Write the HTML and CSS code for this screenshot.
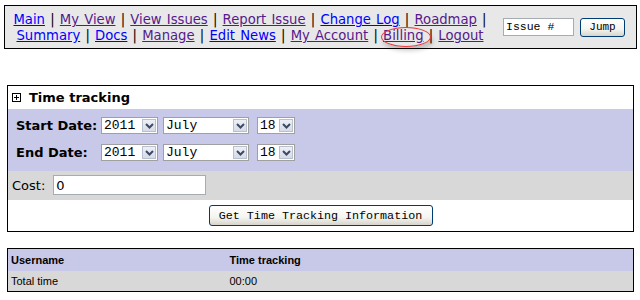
FILE: index.html
```html
<!DOCTYPE html>
<html lang="en">
<head>
  <meta charset="UTF-8" />
  <title>Time tracking</title>
  <link rel="stylesheet" href="styles.css">
</head>
<body>
  <div class="nav">
    <div class="nav-links">
      <a href="#" class="new">Main</a> |
      <a href="#">My View</a> |
      <a href="#">View Issues</a> |
      <a href="#">Report Issue</a> |
      <a href="#" class="new">Change Log</a> |
      <a href="#">Roadmap</a> |
      <a href="#" class="new">Summary</a> |
      <a href="#" class="new">Docs</a> |
      <a href="#">Manage</a> |
      <a href="#" class="new">Edit News</a> |
      <a href="#">My Account</a> |
      <a href="#">Billing</a> |
      <a href="#">Logout</a>
    </div>
    <form class="jump">
      <input type="text" class="jump-input" value="Issue #">
      <button type="button" class="xp-button jump-button">Jump</button>
    </form>
    <div class="callout"></div>
  </div>

  <div class="box">
    <div class="box-title">
      <svg class="toggle" width="9" height="9" viewBox="0 0 9 9">
        <rect x="0.5" y="0.5" width="8" height="8" fill="#fff" stroke="#000"/>
        <path d="M2 4.5h5M4.5 2v5" stroke="#000"/>
      </svg>
      Time tracking
    </div>
    <div class="dates">
      <div class="date-row">
        <span class="date-label">Start Date:</span>
        <span class="dropdown year"><select><option>2011</option></select><span class="arrow"><svg width="9" height="6" viewBox="0 0 9 6"><path d="M1 1l3.5 3.5L8 1" fill="none" stroke="#3c4a66" stroke-width="2"/></svg></span></span>
        <span class="dropdown month"><select><option>July</option></select><span class="arrow"><svg width="9" height="6" viewBox="0 0 9 6"><path d="M1 1l3.5 3.5L8 1" fill="none" stroke="#3c4a66" stroke-width="2"/></svg></span></span>
        <span class="dropdown day"><select><option>18</option></select><span class="arrow"><svg width="9" height="6" viewBox="0 0 9 6"><path d="M1 1l3.5 3.5L8 1" fill="none" stroke="#3c4a66" stroke-width="2"/></svg></span></span>
      </div>
      <div class="date-row">
        <span class="date-label">End Date:</span>
        <span class="dropdown year"><select><option>2011</option></select><span class="arrow"><svg width="9" height="6" viewBox="0 0 9 6"><path d="M1 1l3.5 3.5L8 1" fill="none" stroke="#3c4a66" stroke-width="2"/></svg></span></span>
        <span class="dropdown month"><select><option>July</option></select><span class="arrow"><svg width="9" height="6" viewBox="0 0 9 6"><path d="M1 1l3.5 3.5L8 1" fill="none" stroke="#3c4a66" stroke-width="2"/></svg></span></span>
        <span class="dropdown day"><select><option>18</option></select><span class="arrow"><svg width="9" height="6" viewBox="0 0 9 6"><path d="M1 1l3.5 3.5L8 1" fill="none" stroke="#3c4a66" stroke-width="2"/></svg></span></span>
      </div>
    </div>
    <div class="cost-row">
      <label for="cost">Cost:</label>
      <input type="text" id="cost" class="cost-input" value="0">
    </div>
    <div class="submit-row">
      <button type="button" class="xp-button">Get Time Tracking Information</button>
    </div>
  </div>

  <table class="results">
    <tr class="head">
      <th class="col-user">Username</th>
      <th>Time tracking</th>
    </tr>
    <tr class="row">
      <td>Total time</td>
      <td>00:00</td>
    </tr>
  </table>
</body>
</html>
```

FILE: styles.css
```css
* {
  box-sizing: border-box;
}
body {
  margin: 0;
  font-family: "DejaVu Sans", Verdana, sans-serif;
  font-size: 13px;
  color: #000;
  background: #fff;
}
a {
  color: #551a8b;
}
a.new {
  color: #0000ff;
}

/* top menu */
.nav {
  position: relative;
  display: flex;
  align-items: center;
  margin: 5px 3px 0 4px;
  border: 1px solid #000;
  background: #e8e8e8;
}
.nav-links {
  flex: 1;
  text-align: center;
  font-size: 13.2px;
  word-spacing: 1px;
  line-height: 16px;
  padding: 6px 0 4px;
}
.jump {
  display: flex;
  gap: 6px;
  margin: 0;
  padding: 0 11px 0 8px;
}
.jump-input {
  width: 71px;
  height: 18px;
  margin: 0;
  padding: 0 2px;
  border: 1px solid #a5acb2;
  font-family: "Liberation Mono", monospace;
  font-size: 11.5px;
}
.xp-button {
  height: 21px;
  margin: 0;
  padding: 0 9px;
  border: 1px solid #003c74;
  border-radius: 3px;
  background: linear-gradient(#ffffff, #f4f4f0 60%, #d8d4cc);
  font-family: "Liberation Mono", monospace;
  font-size: 11.7px;
  color: #000;
}
.jump-button {
  width: 45px;
  height: 19px;
  padding: 0;
  font-size: 11px;
}
.callout {
  position: absolute;
  left: 376px;
  top: 21px;
  width: 50px;
  height: 20px;
  border: 1.5px solid #e8383a;
  border-radius: 50%;
  box-shadow: 2px 4px 4px rgba(0, 0, 0, 0.18);
}

/* time tracking form */
.box {
  margin: 36px 6px 0 7px;
  border: 1px solid #000;
}
.box-title {
  display: flex;
  align-items: center;
  gap: 8px;
  height: 23px;
  padding-left: 4px;
  font-weight: bold;
}
.toggle {
  display: block;
}
.dates {
  display: flex;
  flex-direction: column;
  gap: 10px;
  padding: 8px 0 10px 8px;
  background: #c8c8e8;
}
.date-row {
  display: flex;
  align-items: center;
}
.date-label {
  width: 85px;
  font-weight: bold;
}
.dropdown {
  display: inline-flex;
  align-items: stretch;
  height: 17px;
  padding: 1px;
  border: 1px solid #a0a0a0;
  background: #fff;
}
.dropdown select {
  appearance: none;
  flex: 1;
  min-width: 0;
  border: none;
  padding: 0 1px;
  background: #fff;
  font-family: "Liberation Mono", monospace;
  font-size: 13px;
  line-height: 13px;
}
.arrow {
  display: flex;
  align-items: center;
  justify-content: center;
  width: 14px;
  border: 1px solid #b8c0d0;
  background: linear-gradient(#eef0f6, #d6dbe6);
}
.year {
  width: 57px;
  margin-right: 5px;
}
.month {
  width: 86px;
  margin-right: 8px;
}
.day {
  width: 38px;
}
.cost-row {
  display: flex;
  align-items: center;
  gap: 8px;
  height: 29px;
  padding: 0 0 1px 4px;
  background: #d8d8d8;
}
.cost-input {
  width: 153px;
  height: 20px;
  margin: 0;
  padding: 0 2px;
  border: 1px solid #a5acb2;
  font-family: "DejaVu Sans", sans-serif;
  font-size: 13px;
}
.submit-row {
  display: flex;
  justify-content: center;
  height: 31px;
  padding-top: 5px;
}
.submit-row .xp-button {
  width: 224px;
}

/* results */
.results {
  width: 627px;
  margin: 16px 0 0 7px;
  border: 1px solid #000;
  border-collapse: collapse;
  font-family: "Liberation Sans", Tahoma, sans-serif;
  font-size: 11px;
}
.results th,
.results td {
  padding: 0 3px;
  text-align: left;
}
.results .head {
  height: 22px;
  background: #c8c8e8;
}
.results .row {
  height: 21px;
  background: #d8d8d8;
}
.col-user {
  width: 219px;
}
```
